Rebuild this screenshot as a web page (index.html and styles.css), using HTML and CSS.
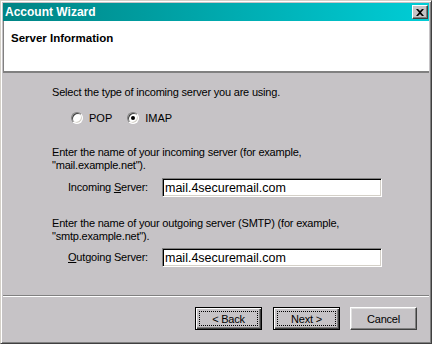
FILE: index.html
```html
<!DOCTYPE html>
<html lang="en">
<head>
    <meta charset="UTF-8">
    <title>Account Wizard</title>
    <link rel="stylesheet" href="styles.css">
</head>
<body>
    <div class="window">
        <div class="titlebar">
            <span class="title">Account Wizard</span>
            <span class="close">
                <svg width="8" height="7" viewBox="0 0 8 7"><path d="M0 0h2l2 2 2-2h2L5 3.5 8 7H6L4 5 2 7H0l3-3.5z" fill="#000"/></svg>
            </span>
        </div>
        <div class="header">
            <h1 class="heading">Server Information</h1>
        </div>
        <div class="content">
            <p class="text">Select the type of incoming server you are using.</p>
            <div class="radios">
                <label class="option"><span class="radio"></span>POP</label>
                <label class="option"><span class="radio checked"></span>IMAP</label>
            </div>
            <p class="text para-in">Enter the name of your incoming server (for example,<br>&quot;mail.example.net&quot;).</p>
            <div class="field">
                <label class="field-label">Incoming <u>S</u>erver:</label>
                <input type="text" class="edit" value="mail.4securemail.com">
            </div>
            <p class="text para-out">Enter the name of your outgoing server (SMTP) (for example,<br>&quot;smtp.example.net&quot;).</p>
            <div class="field field-out">
                <label class="field-label"><u>O</u>utgoing Server:</label>
                <input type="text" class="edit" value="mail.4securemail.com">
            </div>
        </div>
        <div class="footer">
            <button class="btn btn-default"><span class="focus">&lt; Back</span></button>
            <button class="btn btn-default btn-next"><span class="focus">Next &gt;</span></button>
            <button class="btn btn-cancel"><span class="focus plain">Cancel</span></button>
        </div>
    </div>
</body>
</html>
```

FILE: styles.css
```css
body {
    margin: 0;
    font-family: 'Liberation Sans', Arial, sans-serif;
    font-size: 11px;
    color: #000;
    background: #c6c3c6;
}
.window {
    width: 432px;
    height: 344px;
    box-sizing: border-box;
    display: flex;
    flex-direction: column;
    background-color: #c6c3c6;
    border: 1px solid;
    border-color: #d4d0c8 #404040 #404040 #d4d0c8;
    box-shadow: inset 1px 1px #fff, inset -1px -1px #808080;
    padding: 2px;
}
.titlebar {
    height: 18px;
    display: flex;
    align-items: center;
    justify-content: space-between;
    padding: 0 1px 0 2px;
    background: linear-gradient(to right, #008484, #00cdd6);
}
.title {
    color: #fff;
    font-weight: bold;
    font-size: 12px;
    line-height: 18px;
}
.close {
    width: 16px;
    height: 14px;
    box-sizing: border-box;
    display: flex;
    align-items: center;
    justify-content: center;
    background-color: #c6c3c6;
    border: 1px solid;
    border-color: #fff #404040 #404040 #fff;
    box-shadow: inset -1px -1px #808080;
}
.header {
    height: 52px;
    box-sizing: border-box;
    background-color: #fff;
    padding: 11px 0 0 7px;
    border-left: 1px solid #808080;
    border-bottom: 2px solid #808080;
}
.heading {
    margin: 0;
    font-size: 11.5px;
    font-weight: bold;
    line-height: 13px;
}
.content {
    flex: 1;
    padding: 13px 0 0 49px;
}
.text {
    margin: 0;
    line-height: 13px;
    letter-spacing: -0.2px;
}
.radios {
    display: flex;
    height: 12px;
    margin-top: 13px;
    padding-left: 19px;
}
.option {
    display: flex;
    align-items: center;
    gap: 6px;
    line-height: 12px;
    margin-right: 15px;
}
.radio {
    width: 12px;
    height: 12px;
    box-sizing: border-box;
    border-radius: 50%;
    background-color: #fff;
    border: 1px solid;
    border-color: #808080 #fff #fff #808080;
    box-shadow: inset 1px 1px #404040, inset -1px -1px #d4d0c8;
    display: flex;
    align-items: center;
    justify-content: center;
}
.radio.checked::after {
    content: '';
    width: 4px;
    height: 4px;
    border-radius: 50%;
    background-color: #000;
}
.para-in {
    margin-top: 22px;
}
.para-out {
    margin-top: 20px;
}
.field {
    display: flex;
    align-items: center;
    margin-top: 6px;
    padding-left: 16px;
}
.field-out {
    margin-top: 5px;
}
.field-label {
    width: 94px;
    line-height: 13px;
    letter-spacing: -0.2px;
}
.edit {
    width: 220px;
    height: 19px;
    box-sizing: border-box;
    margin: 0;
    padding: 0 0 0 2px;
    font-family: 'Liberation Sans', Arial, sans-serif;
    font-size: 12.5px;
    color: #000;
    background-color: #fff;
    border: 1px solid;
    border-color: #808080 #fff #fff #808080;
    box-shadow: inset 1px 1px #000, inset -1px -1px #d4d0c8;
    outline: none;
}
.footer {
    height: 46px;
    box-sizing: border-box;
    display: flex;
    justify-content: flex-end;
    align-items: flex-start;
    padding: 11px 12px 0 0;
    border-top: 1px solid #808080;
    box-shadow: inset 0 1px #fff;
}
.btn {
    width: 67px;
    height: 23px;
    box-sizing: border-box;
    display: flex;
    padding: 3px;
    margin: 0;
    font-family: 'Liberation Sans', Arial, sans-serif;
    font-size: 11px;
    color: #000;
    background-color: #c6c3c6;
    border: 1px solid;
    border-color: #fff #404040 #404040 #fff;
    box-shadow: inset -1px -1px #808080, inset 1px 1px #dfdfdf;
}
.btn-default {
    border: 1px solid #000;
    box-shadow: inset 1px 1px #fff, inset -1px -1px #404040, inset -2px -2px #808080;
}
.btn-next {
    margin-left: 11px;
}
.btn-cancel {
    margin-left: 10px;
}
.focus {
    flex: 1;
    display: flex;
    align-items: center;
    justify-content: center;
    border: 1px dotted #000;
    letter-spacing: -0.2px;
}
.focus.plain {
    border-color: transparent;
}
```
